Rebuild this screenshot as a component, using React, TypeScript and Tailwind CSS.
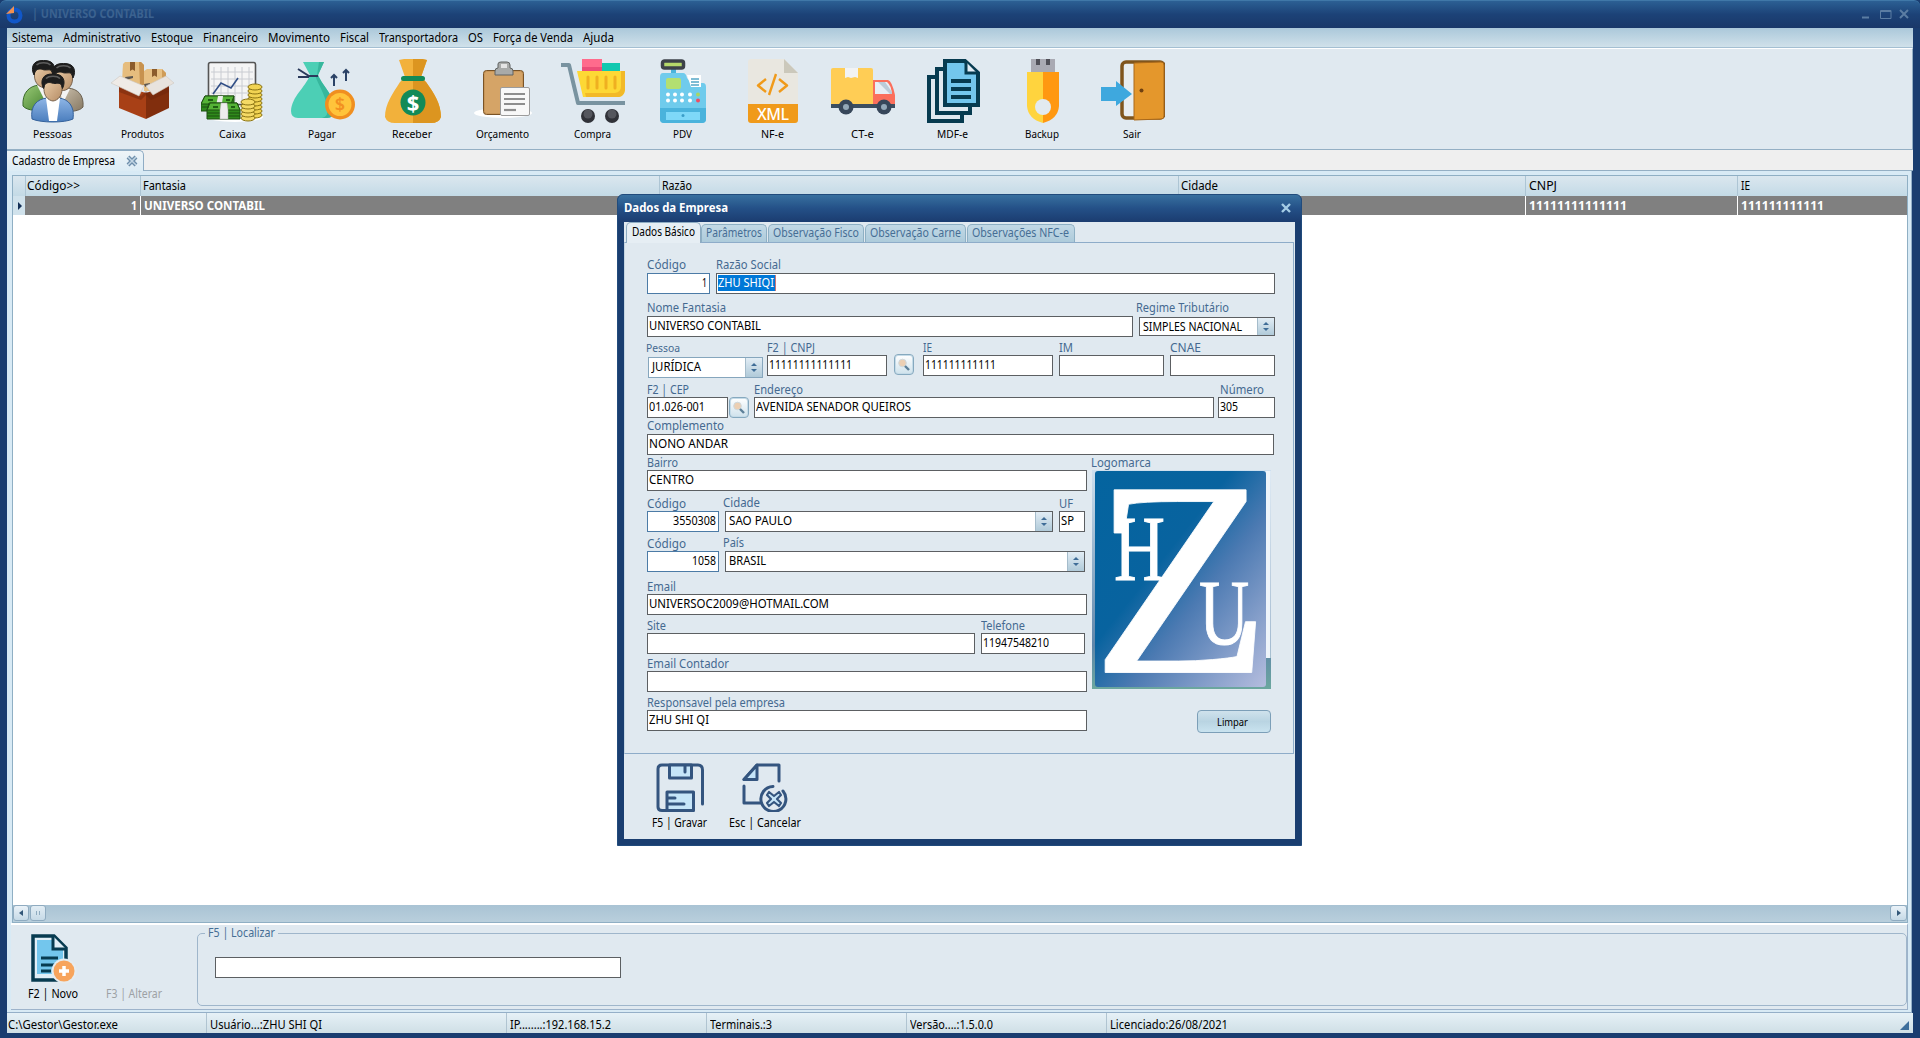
import React, { useLayoutEffect, useRef } from "react";

type Kids = { children?: React.ReactNode; c?: string };

/* Text condensed or expanded horizontally to fill the width of its box. */
function T({ children, c = "" }: Kids) {
  const outer = useRef<HTMLSpanElement>(null);
  const inner = useRef<HTMLSpanElement>(null);
  useLayoutEffect(() => {
    const o = outer.current;
    const i = inner.current;
    if (o && i && i.offsetWidth > 0) {
      i.style.transform = `scaleX(${o.clientWidth / i.getBoundingClientRect().width})`;
    }
  }, []);
  return (
    <span ref={outer} className={`block shrink-0 whitespace-nowrap ${c}`}>
      <span ref={inner} className="inline-block origin-left align-top">
        {children}
      </span>
    </span>
  );
}

function Svg({ children }: Kids) {
  return (
    <svg viewBox="0 0 64 64" className="size-16 shrink-0">
      {children}
    </svg>
  );
}

/* ---------- toolbar icons ---------- */

const Head = ({ x, y }: { x: number; y: number }) => (
  <g transform={`translate(${x} ${y})`}>
    <path d="M-9 9C-9 4 9 4 9 9V16C9 22 5 27 0 27.500C-5 27-9 22-9 16Z" fill="url(#skin)" stroke="#6d5741" strokeWidth=".9" />
    <path d="M-9.500 15C-13 8-11 0 0 .5C11 0 13 8 9.500 15L8.500 12C7 8 3 11-1 9.500C-4 8.500-7 9-8.500 12Z" fill="#1d1d1d" stroke="#1d1d1d" strokeLinejoin="round" />
    <path d="M-7 5C-4 2 4 2 7 5" stroke="#5e5e5e" strokeWidth="1.500" fill="none" />
  </g>
);

const Pessoas = () => (
  <Svg>
    <defs>
      <linearGradient id="gr" x1="0" y1="0" x2="1" y2="1"><stop offset="0" stopColor="#9bcb78" /><stop offset="1" stopColor="#3c7a27" /></linearGradient>
      <linearGradient id="br" x1="0" y1="0" x2="1" y2="1"><stop offset="0" stopColor="#cfc4b1" /><stop offset="1" stopColor="#857761" /></linearGradient>
      <linearGradient id="bl" x1="0" y1="0" x2="0" y2="1"><stop offset="0" stopColor="#8fb6e6" /><stop offset="1" stopColor="#4a7dbd" /></linearGradient>
      <linearGradient id="skin" x1="0" y1="0" x2="1" y2="1"><stop offset="0" stopColor="#edcfaa" /><stop offset="1" stopColor="#b58c65" /></linearGradient>
    </defs>
    <path d="M2 47C1 34 8 27 18 26L30 28L28 52C18 52 6 52 2 47Z" fill="url(#gr)" stroke="#39692a" />
    <path d="M62 48C63 36 57 30 47 29L36 29L38 53C50 53 59 52 62 48Z" fill="url(#br)" stroke="#6b6050" />
    <path d="M16 26L26 46L30 28ZM38 29L42 44L49 30Z" fill="#f4f4f4" />
    <Head x={42.500} y={4} />
    <Head x={22.500} y={1} />
    <path d="M11 60C9 47 16 40 26 39H38C47 40 54 47 52 60C44 64 20 64 11 60Z" fill="url(#bl)" stroke="#35629c" />
    <path d="M25 39L28 62H36L39 39Z" fill="#fff" />
    <Head x={32} y={14.500} />
  </Svg>
);

const Produtos = () => (
  <Svg>
    <path d="M12 5L14 3H30L33 6V26H14L11 22Z" fill="#e6bd7e" />
    <path d="M28 3H30L33 6V26H29Z" fill="#c7924f" />
    <path d="M19 3H24V12L21.500 10.500L19 12Z" fill="#8c5c2c" />
    <path d="M33 12L36 10H51L55 14V26L44 32H33Z" fill="#e8c184" />
    <path d="M51 10L55 14V26L51 27Z" fill="#cf9c58" />
    <path d="M41 10H46V18L43.500 16.500L41 18Z" fill="#8c5c2c" />
    <path d="M14 18L22 17V19L15 21Z" fill="#5b5651" />
    <path d="M33 25L39 24V26L34 28Z" fill="#5b5651" />
    <path d="M8 26L35 34V60L8 49Z" fill="#a84016" />
    <path d="M35 34L58 26V49L35 60Z" fill="#812e0d" />
    <path d="M8 26L27 35L30 37L35 32L40 37L58 28V33L40 41L35 36L30 41L8 33Z" fill="#6b230a" opacity=".45" />
    <path d="M9 17L33 27L28 37L0 24Z" fill="#efebe7" stroke="#cfc7c0" strokeWidth=".6" />
    <path d="M55 17L35 27L42 36L63 24Z" fill="#e8e3de" stroke="#cfc7c0" strokeWidth=".6" />
  </Svg>
);

const Caixa = () => (
  <Svg>
    <ellipse cx="34" cy="58" rx="28" ry="5" fill="#fff" />
    <rect x="7.500" y="3.500" width="47" height="42" rx="2" fill="#f5f5f5" stroke="#555" strokeWidth="1.600" />
    <path d="M13 8V42M20 8V42M27 8V42M34 8V42M41 8V42M48 8V42M10 13H52M10 20H52M10 27H52M10 34H52" stroke="#c9ccd2" />
    <path d="M12 35L20 24L30 29L37 19" stroke="#324f86" strokeWidth="1.600" fill="none" />
    {[56, 52, 48, 44, 40, 36, 32, 28].map((y) => (
      <ellipse key={y} cx="54" cy={y} rx="7" ry="3" fill="#f1d352" stroke="#8b7413" />
    ))}
    {[59, 55, 51, 47, 43].map((y) => (
      <ellipse key={y} cx="47" cy={y} rx="7" ry="3" fill="#f4da65" stroke="#8b7413" />
    ))}
    <path d="M4 37H33V47L30 52H0V45Z" fill="#2f8a1c" stroke="#1c4f10" />
    <path d="M4 37H33L30 45H0Z" fill="#55b336" stroke="#1c4f10" />
    <path d="M17 37H22L20 52H14Z" fill="#ececec" />
    <path d="M8 44H36L39 51V60H6V51Z" fill="#2f8a1c" stroke="#1c4f10" />
    <path d="M9 44H36L39 51H6Z" fill="#55b336" stroke="#1c4f10" />
    <path d="M6 54H39M6 57H39M1 48H8" stroke="#1c4f10" />
    <path d="M20 44H26L27 51V60H19V51Z" fill="#ededed" stroke="#aaa" strokeWidth=".5" />
    <path d="M12 48H17M30 48H34M7 41H12M25 41H29" stroke="#1f6012" strokeWidth="2" />
  </Svg>
);

const Pagar = () => (
  <Svg>
    <path d="M12 3H33L27 16C32 28 44 36 43 52Q43 59 36 59H7Q0 59 0 52C1 37 14 29 19 16Z" fill="#4ccfb5" />
    <path d="M33 3L27 16L26 16L28 3ZM27 16C32 28 44 36 43 52Q43 59 36 59H31Q38 57 36 50C36 38 28 28 24 16Z" fill="#37b79d" />
    <path d="M7 10L18 17H27M7 18H18" stroke="#2b3a5b" strokeWidth="2" fill="none" />
    <path d="M43 27V16M40 19L43 16L46 19M55 22V11M52 14L55 11L58 14" stroke="#2b4266" strokeWidth="2" fill="none" />
    <circle cx="49" cy="45.500" r="15" fill="#f08f20" />
    <circle cx="49" cy="45.500" r="11.500" fill="#ffc43b" />
    <text x="49" y="52" textAnchor="middle" fontFamily="Noto Sans" fontSize="18" fontWeight="600" fill="#f39020">$</text>
  </Svg>
);

const Receber = () => (
  <Svg>
    <path d="M18 1C25-1 38-1 46 1L40 18L45 23C53 34 60 45 60 58Q58 64 50 64H14Q6 64 4 58C4 45 12 34 19 23L24 18Z" fill="#f2b13b" />
    <path d="M32 0C38-1 42 0 46 1L40 18L45 23C53 34 60 45 60 58Q58 64 50 64H32Z" fill="#dc9520" />
    <rect x="20" y="17" width="24" height="5" rx="2.500" fill="#128a57" />
    <ellipse cx="32" cy="43.500" rx="12.500" ry="13" fill="#128a57" />
    <text x="32" y="51.500" textAnchor="middle" fontFamily="Noto Sans" fontSize="22" fontWeight="700" fill="#fff">$</text>
  </Svg>
);

const Orcamento = () => (
  <Svg>
    <ellipse cx="32" cy="54" rx="29" ry="5" fill="#fff" />
    <rect x="12.500" y="11.500" width="40" height="44" rx="3" fill="#c8975a" stroke="#7a5326" />
    <rect x="14" y="13" width="37" height="41" rx="2" fill="#d5a467" />
    <path d="M24 16V12Q24 9 27 9V5Q27 3 30 3H36Q39 3 39 6V9Q42 9 42 12V16Z" fill="#a8aaa9" stroke="#606362" />
    <rect x="30" y="5" width="6" height="4" fill="#e4e4e4" />
    <rect x="29.500" y="28.500" width="29" height="28" rx="1.500" fill="#f8f8f8" stroke="#9c9c9c" />
    <path d="M33 35H54M33 40H54M33 45H54" stroke="#8e8e8e" strokeWidth="2.200" />
    <path d="M33 51H45" stroke="#8e8e8e" strokeWidth="2.200" />
  </Svg>
);

const Compra = () => (
  <Svg>
    <rect x="21" y="0" width="20" height="12" fill="#ff6b8c" />
    <rect x="21" y="8" width="20" height="4" fill="#ec4d78" />
    <rect x="41" y="4" width="18" height="8" fill="#10c8b0" />
    <path d="M16 12H64V31Q63 37 58 38H22Z" fill="#fdd835" />
    <path d="M60 12H64V31Q63 37 58 38H25L24 34H54Q60 33 60 27Z" fill="#f2b928" />
    <g stroke="#efb021" strokeWidth="3" strokeLinecap="round"><path d="M27 18V29M36 18V29M45 18V29M54 18V29" /></g>
    <path d="M0 6H8L17 44H64" stroke="#7993a0" strokeWidth="4" fill="none" strokeLinejoin="round" />
    <circle cx="27" cy="57" r="7" fill="#303238" /><circle cx="51" cy="57" r="7" fill="#303238" />
    <circle cx="27" cy="55" r="4.500" fill="#54565d" /><circle cx="51" cy="55" r="4.500" fill="#54565d" />
  </Svg>
);

const Pdv = () => (
  <Svg>
    <rect x="20" y="9" width="5" height="8" fill="#4bb4dc" />
    <rect x="11.500" y="2" width="21" height="7" rx="2" fill="#b5d86a" stroke="#3d4249" strokeWidth="3.500" />
    <path d="M9 18Q9 14 12 14H32Q35 14 36 19L40 24H52Q55 24 55 28V60Q55 64 51 64H13Q9 64 9 60Z" fill="#6fcbec" />
    <path d="M9 49H55V60Q55 64 51 64H13Q9 64 9 60Z" fill="#4ab3dc" />
    <rect x="15" y="19" width="15" height="11" rx="2" fill="#b3df71" />
    <path d="M36 16H50V28H40Z" fill="#fff" />
    <path d="M40 20H48M40 23H48M40 26H48" stroke="#55a7c6" strokeWidth="1.600" />
    {[17, 24, 31, 39].map((x) => <g key={x} fill="#fff"><circle cx={x} cy="35.500" r="2" /><circle cx={x} cy="41.500" r="2" /></g>)}
    <circle cx="47" cy="35.500" r="2" fill="#a8d663" /><circle cx="47" cy="41.500" r="2" fill="#ef4d63" />
    <rect x="15" y="53" width="34" height="8" fill="#7ed8f8" /><circle cx="32" cy="56.500" r="1.500" fill="#3a9dc8" />
  </Svg>
);

const Nfe = () => (
  <Svg>
    <path d="M7 3Q7 0 10 0H43L57 14V46H7Z" fill="#e9e7e0" />
    <path d="M43 0L57 14H43Z" fill="#cbc8bb" />
    <path d="M25 20L17 26.500L25 33M38 20L46 26.500L38 33M35 15L28 36" stroke="#f09a1a" strokeWidth="2.400" fill="none" strokeLinejoin="round" />
    <path d="M7 45H57V61Q57 64 54 64H10Q7 64 7 61Z" fill="#f09a1a" />
    <text x="32" y="60.500" textAnchor="middle" fontFamily="Noto Sans" fontSize="16" fontWeight="500" fill="#fff" textLength="32">XML</text>
  </Svg>
);

const Cte = () => (
  <Svg>
    <rect x="0" y="9" width="42" height="38" rx="2" fill="#ffcd55" />
    <path d="M14 9H27V19L24 18L20 19L17 18L14 19Z" fill="#f2f3f4" />
    <path d="M42 21H57Q61 22 64 36V46H42Z" fill="#fb6f5c" />
    <path d="M44 23H56Q60 26 61 35H44Z" fill="#e8eef4" /><path d="M47 23H54L61 33V35H59Z" fill="#bccbd8" />
    <path d="M0 45H64V49H0Z" fill="#3c4e60" />
    <circle cx="15" cy="48" r="7.500" fill="#37475a" /><circle cx="15" cy="48" r="3" fill="#93a8b8" />
    <circle cx="53" cy="48" r="7.500" fill="#37475a" /><circle cx="53" cy="48" r="3" fill="#93a8b8" />
  </Svg>
);

const Mdfe = () => (
  <Svg>
    <path d="M15 18H8V62H41V56" stroke="#073b50" strokeWidth="4" fill="none" />
    <path d="M23 10H16V54H49V48" stroke="#073b50" strokeWidth="4" fill="none" />
    <path d="M24 2H44L57 14V46H24Z" fill="#73c6ed" stroke="#073b50" strokeWidth="4" />
    <path d="M45 3V14H56" fill="#e3edf5" stroke="#073b50" strokeWidth="3" />
    <path d="M30 22H50M30 30H50M30 38H50" stroke="#073b50" strokeWidth="3.800" />
  </Svg>
);

const Backup = () => (
  <Svg>
    <rect x="20" y="0" width="24" height="14" fill="#a9aab3" />
    <path d="M25 0H29V6H25ZM35 0H39V6H35Z" fill="#505058" />
    <path d="M16 13H32V64Q17 60 16 47Z" fill="#ffd43e" />
    <path d="M32 13H48V47Q47 60 32 64Z" fill="#ff9811" />
    <circle cx="32" cy="48" r="8" fill="#e2eaf0" />
  </Svg>
);

const Sair = () => (
  <Svg>
    <rect x="21" y="3" width="42" height="56" rx="4" fill="#e8edf0" stroke="#80551c" strokeWidth="3.500" />
    <path d="M33 4L60 3Q63 3 63 6V57Q63 60 60 60L33 61Z" fill="#e4972c" stroke="#a9681a" />
    <circle cx="40.500" cy="31.500" r="2" fill="#70400f" />
    <path d="M0 28H15V22L31 35L15 47V42H0Z" fill="#3ea8de" />
  </Svg>
);

const tools: [string, string, () => React.ReactElement][] = [
  ["Pessoas", "w-[39px]", Pessoas],
  ["Produtos", "w-[43px]", Produtos],
  ["Caixa", "w-[27px]", Caixa],
  ["Pagar", "w-[28px]", Pagar],
  ["Receber", "w-[40px]", Receber],
  ["Orçamento", "w-[53px]", Orcamento],
  ["Compra", "w-[37px]", Compra],
  ["PDV", "w-[19px]", Pdv],
  ["NF-e", "w-[23px]", Nfe],
  ["CT-e", "w-[23px]", Cte],
  ["MDF-e", "w-[31px]", Mdfe],
  ["Backup", "w-[34px]", Backup],
  ["Sair", "w-[18px]", Sair],
];

const menu: [string, string][] = [
  ["Sistema", "w-[41px]"],
  ["Administrativo", "w-[78px]"],
  ["Estoque", "w-[42px]"],
  ["Financeiro", "w-[55px]"],
  ["Movimento", "w-[62px]"],
  ["Fiscal", "w-[29px]"],
  ["Transportadora", "w-[79px]"],
  ["OS", "w-[15px]"],
  ["Força de Venda", "w-[80px]"],
  ["Ajuda", "w-[31px]"],
];

/* ---------- form pieces ---------- */

type FieldProps = { w: string; label: string; lw: string; lc?: string; value?: string; vw?: string; right?: boolean; select?: boolean; c?: string; box?: string };

const Arrows = () => (
  <div className="flex w-[17px] flex-col items-center justify-center gap-[3px] border-l border-[#a5bccb] bg-linear-to-b from-[#e2edf5] to-[#b0cad9]">
    <div className="border-x-[3px] border-b-[3px] border-x-transparent border-b-[#3f6d97]" />
    <div className="border-x-[3px] border-t-[3px] border-x-transparent border-t-[#3f6d97]" />
  </div>
);

function Field({ w, label, lw, lc = "", value, vw = "", right, select, c = "", box }: FieldProps) {
  const frame = box ?? (right ? "h-[21px] border-[#4c7ba6]" : "h-[21px] border-[#5c5f62]");
  return (
    <div className={`flex shrink-0 flex-col ${w} ${c}`}>
      <div className={`h-4 leading-4 text-[#456990] ${lc}`}>
        <T c={lw}>{label}</T>
      </div>
      <div className={`flex border bg-white ${frame}`}>
        <div className={`flex min-w-0 grow text-black leading-[17px] ${right ? "justify-end pr-[2px]" : select ? "pl-[3px]" : "pl-px"}`}>
          {value && <T c={vw}>{value}</T>}
        </div>
        {select && <Arrows />}
      </div>
    </div>
  );
}

const Search = ({ c }: { c: string }) => (
  <div className={`flex h-[21px] w-5 shrink-0 items-center justify-center rounded-[4px] border border-[#86a9bf] bg-linear-to-b from-white to-[#cfe2ec] shadow-[inset_0_0_0_1px_#c5dbe8] ${c}`}>
    <svg viewBox="0 0 14 14" className="size-3.5">
      <circle cx="5.500" cy="5" r="3.800" fill="#eccfb3" stroke="#cfd8dc" />
      <path d="M8 8L12 12" stroke="#5d8099" strokeWidth="2.400" />
    </svg>
  </div>
);

const tabs: [string, string, string][] = [
  ["Parâmetros", "w-[66px]", "w-[56px]"],
  ["Observação Fisco", "w-[96px]", "w-[86px]"],
  ["Observação Carne", "w-[101px]", "w-[91px]"],
  ["Observações NFC-e", "w-[108px]", "w-[97px]"],
];

const Logo = () => (
  <svg viewBox="0 0 179 219" className="h-[219px] w-[179px] overflow-visible">
    <defs>
      <linearGradient id="lg" x1="0" y1="0" x2="1" y2="1">
        <stop offset="0" stopColor="#04649f" /><stop offset=".4" stopColor="#08639f" /><stop offset=".6" stopColor="#4c7ab2" /><stop offset="1" stopColor="#b5bdde" />
      </linearGradient>
      <linearGradient id="lb" x1="0" y1="0" x2="0" y2="1">
        <stop offset="0" stopColor="#cfe0ee" /><stop offset=".8" stopColor="#5f86aa" /><stop offset="1" stopColor="#6ba79e" />
      </linearGradient>
    </defs>
    <rect width="179" height="219" fill="url(#lb)" />
    <rect x="173.500" y="1" width="5" height="187" fill="#eef4fa" />
    <rect x="3" y="1" width="171" height="216" rx="3" fill="url(#lg)" />
    <text transform="translate(-1 202.500) scale(2.960 2.790)" fontFamily="Liberation Serif" fontSize="100" fill="#fff" stroke="#fff" strokeWidth=".3">Z</text>
    <text transform="translate(22 109.500) scale(.76 1)" fontFamily="Liberation Serif" fontSize="93" fill="#fff" stroke="#fff">H</text>
    <text transform="translate(107 174) scale(.74 1)" fontFamily="Liberation Serif" fontSize="94" fill="#fff" stroke="#fff">U</text>
  </svg>
);

function Dialog() {
  return (
    <div className="absolute left-[617px] top-[194px] flex h-[652px] w-[685px] flex-col rounded-t-[6px] border border-[#214b7c] bg-[#1a3e70] px-[6px] pb-[6px]">
      <div className="-mx-[6px] flex h-[27px] items-center justify-between rounded-t-[5px] bg-linear-to-b from-[#38709f] via-[#245087] to-[#1b3c70] pl-[6px] pr-[9px]">
        <T c="-mt-px w-[104px] text-[12px] font-bold leading-4 text-white">Dados da Empresa</T>
        <svg viewBox="0 0 12 12" className="-mt-px size-3"><path d="M2 2L10 10M10 2L2 10" stroke="#a5cde6" strokeWidth="2.400" /></svg>
      </div>
      <div className="flex grow flex-col bg-[#e0e9f0] text-[12px]">
        <div className="flex h-[20px] items-end pl-[2px] leading-4">
          <div className="relative z-10 -mb-px flex h-[21px] w-[75px] rounded-t-[5px] border border-b-0 border-[#8eacc2] bg-[#e6eef4] pl-[5px] pt-px text-black">
            <T c="w-[63px]">Dados Básico</T>
          </div>
          {tabs.map(([t, w, tw]) => (
            <div key={t} className={`mr-px flex h-[18px] rounded-t-[5px] border border-b-0 border-[#8eb0c4] bg-linear-to-b from-[#c3d9e6] to-[#adcbdb] pl-[4px] text-[#466e95] ${w}`}>
              <T c={tw}>{t}</T>
            </div>
          ))}
        </div>
        <div className="mr-px h-[512px] border border-[#8eacc9] border-l-[#c4d5e2] pl-[22px] pt-[14px]">
          <div className="flex">
            <Field w="w-[63px]" label="Código" lw="w-[39px]" value="1" vw="w-[5px]" right />
            <div className="ml-[6px] flex w-[559px] flex-col">
              <div className="h-4 leading-4 text-[#456990]"><T c="w-[65px]">Razão Social</T></div>
              <div className="h-[21px] border border-[#5c5f62] bg-white p-px">
                <div className="h-[16px] w-[58px] border-r border-[#c77] bg-[#0078d7] leading-4 text-white"><T c="w-[56px]">ZHU SHIQI</T></div>
              </div>
            </div>
          </div>
          <div className="mt-[6px] flex">
            <Field w="w-[486px]" label="Nome Fantasia" lw="w-[79px]" value="UNIVERSO CONTABIL" vw="w-[112px]" />
            <Field w="w-[139px]" c="ml-[3px]" label="Regime Tributário" lw="w-[93px]" value="SIMPLES NACIONAL" vw="w-[99px]" select box="ml-[3px] mt-px h-[19px] border-[#5c5f62]" />
          </div>
          <div className="mt-[2px] flex">
            <Field w="w-[117px]" c="-ml-px mr-[3px]" label="Pessoa" lw="w-[34px]" lc="mt-px -mb-px text-[11px]" value="JURÍDICA" vw="w-[49px]" select box="ml-[2px] -mb-[3px] mt-[2px] h-[21px] border-[#86a6bd]" />
            <Field w="w-[120px]" c="ml-px" label="F2 | CNPJ" lw="w-[48px]" lc="mt-px -mb-px" value="11111111111111" vw="w-[83px]" />
            <Search c="ml-[7px] mt-[15px]" />
            <Field w="w-[130px]" c="ml-[9px]" label="IE" lw="w-[9px]" lc="mt-px -mb-px" value="111111111111" vw="w-[71px]" />
            <Field w="w-[105px]" c="ml-[6px]" label="IM" lw="w-[14px]" lc="mt-px -mb-px" />
            <Field w="w-[105px]" c="ml-[6px]" label="CNAE" lw="w-[31px]" lc="mt-px -mb-px" />
          </div>
          <div className="mt-[5px] flex">
            <Field w="w-[81px]" label="F2 | CEP" lw="w-[42px]" lc="mt-px -mb-px" value="01.026-001" vw="w-[56px]" />
            <Search c="ml-px mt-[16px]" />
            <Field w="w-[460px]" c="ml-[5px]" label="Endereço" lw="w-[49px]" lc="mt-px -mb-px" value="AVENIDA SENADOR QUEIROS" vw="w-[155px]" />
            <Field w="w-[57px]" c="ml-[4px]" label="Número" lw="w-[44px] ml-[2px]" lc="mt-px -mb-px" value="305" vw="w-[18px]" />
          </div>
          <Field w="w-[627px]" label="Complemento" lw="w-[77px]" value="NONO ANDAR" vw="w-[79px]" />
          <div className="-mt-px flex">
            <div className="w-[440px]">
              <Field w="w-[440px]" label="Bairro" lw="w-[31px]" lc="mt-px -mb-px" value="CENTRO" vw="w-[45px]" />
              <div className="mt-[4px] flex">
                <Field w="w-[72px]" label="Código" lw="w-[39px]" lc="mt-px -mb-px" value="3550308" vw="w-[43px]" right />
                <Field w="w-[330px]" c="ml-[4px]" label="Cidade" lw="w-[37px]" value="SAO PAULO" vw="w-[63px]" select box="ml-[2px] h-[21px] border-[#5c5f62]" />
                <Field w="w-[26px]" c="ml-[6px]" label="UF" lw="w-[14px]" lc="mt-px -mb-px" value="SP" vw="w-[13px]" />
              </div>
              <div className="mt-[3px] flex">
                <Field w="w-[72px]" label="Código" lw="w-[39px]" lc="mt-px -mb-px" value="1058" vw="w-[24px]" right />
                <Field w="w-[362px]" c="ml-[4px]" label="País" lw="w-[21px]" value="BRASIL" vw="w-[37px]" select box="ml-[2px] h-[21px] border-[#5c5f62]" />
              </div>
              <Field w="w-[440px]" c="mt-[6px]" label="Email" lw="w-[29px]" lc="mt-px -mb-px" value="UNIVERSOC2009@HOTMAIL.COM" vw="w-[180px]" />
              <div className="mt-[2px] flex">
                <Field w="w-[328px]" label="Site" lw="w-[19px]" lc="mt-px -mb-px" />
                <Field w="w-[104px]" c="ml-[6px]" label="Telefone" lw="w-[44px]" lc="mt-px -mb-px" value="11947548210" vw="w-[66px]" />
              </div>
              <Field w="w-[440px]" c="mt-px" label="Email Contador" lw="w-[82px]" lc="mt-px -mb-px" />
              <Field w="w-[440px]" c="mt-[2px]" label="Responsavel pela empresa" lw="w-[138px]" lc="mt-px -mb-px" value="ZHU SHI QI" vw="w-[60px]" />
            </div>
            <div className="ml-[4px] flex w-[181px] flex-col">
              <T c="mt-px -mb-px w-[60px] leading-4 text-[#456990]">Logomarca</T>
              <div className="ml-px"><Logo /></div>
              <div className="ml-[106px] mt-[21px] flex h-[23px] w-[74px] items-center justify-center rounded-[4px] border border-[#7c9fb8] bg-linear-to-b from-[#cfe2ec] via-[#b9d4e2] to-[#c9e3ef] pr-[3px] text-[11px]">
                <T c="w-[31px] leading-4">Limpar</T>
              </div>
            </div>
          </div>
        </div>
        <div className="flex pl-[27px] pt-[8px] leading-4 text-black">
          <div className="flex w-[57px] flex-col items-center">
            <svg viewBox="0 -1 48 50" className="h-[50px] w-[48px]" fill="none" stroke="#34557f" strokeWidth="3" strokeLinecap="round" strokeLinejoin="round">
              <path d="M46.500 41V7Q46.500 2 42 2H6Q2 2 2 6V44Q2 47.500 6 47.500H37" />
              <path d="M13.500 2H35.500V15H13.500Z" fill="#c6e5f8" /><path d="M29 3V9" />
              <path d="M11 29H37.500V47.500H11Z" fill="#c6e5f8" /><path d="M12 35H19M12 41H28" />
            </svg>
            <T c="mt-[3px] w-[55px]">F5 | Gravar</T>
          </div>
          <div className="ml-[19px] flex w-[75px] flex-col items-center">
            <svg viewBox="0 -1 46 50" className="h-[50px] w-[46px]" fill="none" stroke="#34557f" strokeWidth="3" strokeLinecap="round" strokeLinejoin="round">
              <path d="M37 18V2H15L2 16.500M2 23V40H19" />
              <path d="M15 2V16.500H2Z" fill="#c6e5f8" />
              <path d="M31 23.500A12.500 12.500 0 1 0 41 28" />
              <path d="M27 29L32 33L37 29L39 32L35 36L39 40L37 43L32 39L27 43L25 40L29 36L25 32Z" fill="#c6e5f8" strokeWidth="2.200" />
            </svg>
            <T c="mt-[3px] w-[72px]">Esc | Cancelar</T>
          </div>
        </div>
      </div>
    </div>
  );
}

const columns: [string, string, string, string, string][] = [
  ["Código>>", "w-[115px] pl-px", "w-[53px]", "", ""],
  ["Fantasia", "w-[519px] pl-[2px]", "w-[43px]", "UNIVERSO CONTABIL", "w-[121px]"],
  ["Razão", "w-[519px] pl-[2px]", "w-[30px]", "", ""],
  ["Cidade", "w-[347px] pl-[2px]", "w-[37px]", "", ""],
  ["CNPJ", "w-[212px] pl-[3px]", "w-[28px]", "11111111111111", "w-[98px]"],
  ["IE", "grow pl-[3px]", "w-[9px]", "111111111111", "w-[83px]"],
];

const status: [string, string, string][] = [
  ["C:\\Gestor\\Gestor.exe", "w-[199px] pl-px", "w-[110px]"],
  ["Usuário...:ZHU SHI QI", "w-[300px] pl-[3px] border-l", "w-[112px]"],
  ["IP........:192.168.15.2", "w-[200px] pl-[3px] border-l", "w-[101px]"],
  ["Terminais.:3", "w-[200px] pl-[3px] border-l", "w-[62px]"],
  ["Versão....:1.5.0.0", "w-[200px] pl-[3px] border-l", "w-[83px]"],
  ["Licenciado:26/08/2021", "grow pl-[3px] border-l", "w-[118px]"],
];

export default function App() {
  return (
    <div className="relative flex h-[1038px] w-[1920px] flex-col overflow-hidden bg-[#1a3d70] font-['Noto_Sans',sans-serif] text-[12px] text-black">
      {/* title bar */}
      <div className="flex h-[28px] shrink-0 items-center rounded-t-[6px] border-t border-[#4078a8] bg-linear-to-b from-[#2c6094] via-[#1c4277] to-[#1a3869] pl-[6px] pr-[10px]">
        <svg viewBox="0 0 18 18" className="size-[18px]">
          <circle cx="8.500" cy="9.500" r="6" fill="none" stroke="#1157c9" strokeWidth="4" />
          <path d="M0 8L8 0V7Z" fill="#f09050" />
        </svg>
        <T c="-mt-px ml-[8px] w-[122px] font-bold leading-4 text-[#3b6290]">| UNIVERSO CONTABIL</T>
        <svg viewBox="0 0 50 12" className="-mt-[2px] ml-auto h-3 w-[50px]" fill="none" stroke="#5b7da3">
          <path d="M2 9.500H9" strokeWidth="2" /><path d="M20.500 2.500H31V10.500H20.500ZM20 3.500H31" /><path d="M40 2L48 10M48 2L40 10" strokeWidth="2" />
        </svg>
      </div>

      <div className="mx-[7px] flex h-[1005px] shrink-0 flex-col">
        <div className="flex h-[20px] shrink-0 gap-[10px] border-b border-[#a4bfd2] bg-linear-to-b from-[#abc8da] to-[#d0e1ea] pl-[5px] leading-[19px]">
          {menu.map(([m, w]) => <T key={m} c={w}>{m}</T>)}
        </div>
        <div className="flex h-[102px] shrink-0 border-b border-r border-t border-b-[#94afc4] border-r-[#94afc4] border-t-white bg-[#e0e9f0] pt-[10px]">
          {tools.map(([name, w, Icon]) => (
            <div key={name} className="flex w-[90px] shrink-0 flex-col items-center text-[11px]">
              <div className="ml-px"><Icon /></div>
              <T c={`mt-[3px] leading-4 ${w}`}>{name}</T>
            </div>
          ))}
        </div>

        {/* document tab */}
        <div className="flex h-[21px] shrink-0 border-b border-[#94afc4] bg-[#efefef]">
          <div className="-mb-px flex h-[21px] w-[137px] items-center rounded-tr-[5px] border-r border-t border-[#8facc4] bg-linear-to-b from-[#eef4f8] to-[#dcecf5] pl-[5px]">
            <T c="-mt-px w-[103px] leading-4">Cadastro de Empresa</T>
            <svg viewBox="0 0 12 12" className="ml-[11px] size-3"><path d="M2 2L10 10M10 2L2 10" stroke="#6d8eab" strokeWidth="4" /><path d="M2 2L10 10M10 2L2 10" stroke="#c3d6e4" strokeWidth="1.500" /></svg>
          </div>
        </div>

        <div className="mr-px flex h-[842px] shrink-0 flex-col border-b border-r border-[#94afc8] bg-[#d8eaf5] pl-[5px] pr-[3px] pt-[4px]">
          {/* grid */}
          <div className="flex h-[748px] shrink-0 flex-col border border-[#8fafc4] bg-white">
            <div className="flex h-[20px] shrink-0 bg-linear-to-b from-[#dbe7ef] to-[#c3dae6] leading-5">
              <div className="w-[12px] shrink-0" />
              {columns.map(([h, w, tw]) => (
                <div key={h} className={`shrink-0 border-l border-[#adc5d4] ${w}`}><T c={tw}>{h}</T></div>
              ))}
            </div>
            <div className="flex h-[19px] shrink-0 bg-[#808080] font-bold leading-[19px] text-white">
              <div className="flex w-[12px] shrink-0 items-center bg-[#d0e2ec] pl-[5px]">
                <div className="border-y-[4px] border-l-[4px] border-y-transparent border-l-[#132f57]" />
              </div>
              {columns.map(([h, w, , v, vw], i) => (
                <div key={h} className={`shrink-0 border-l ${i === 0 ? "flex justify-end border-[#808080] pr-[3px]" : i === 2 || i === 3 ? "border-[#808080]" : "border-white"} ${w}`}>
                  {i === 0 && <T c="w-[6px]">1</T>}
                  {v && <T c={`${vw} ${i === 1 ? "ml-px" : ""}`}>{v}</T>}
                </div>
              ))}
            </div>
            <div className="grow" />
            <div className="flex h-[17px] shrink-0 justify-between bg-linear-to-b from-[#a9c3d4] to-[#b9cfdc]">
              <div className="flex gap-px">
                <div className="flex h-[16px] w-[16px] items-center justify-center rounded-[3px] border border-[#8fabc0] bg-linear-to-b from-[#eaf2f8] to-[#c6dae7]"><div className="border-y-[3px] border-r-[4px] border-y-transparent border-r-[#335879]" /></div>
                <div className="flex h-[16px] w-[16px] items-center justify-center gap-[2px] rounded-[3px] border border-[#8fabc0] bg-linear-to-b from-[#e2edf4] to-[#c6dae7]"><div className="h-[4px] w-px bg-[#8fabc0]" /><div className="h-[4px] w-px bg-[#8fabc0]" /></div>
              </div>
              <div className="flex h-[16px] w-[17px] items-center justify-center rounded-[3px] border border-[#8fabc0] bg-linear-to-b from-[#eaf2f8] to-[#c6dae7]"><div className="border-y-[3px] border-l-[4px] border-y-transparent border-l-[#335879]" /></div>
            </div>
          </div>

          {/* record actions and search */}
          <div className="-ml-px flex h-[87px] shrink-0 border-b border-r border-t-2 border-b-[#9db3cb] border-r-[#9db3cb] border-t-white bg-[#e0e9f0]">
            <div className="flex w-[186px] shrink-0 pt-[9px]">
              <div className="ml-[17px] flex w-[51px] flex-col">
                <svg viewBox="0 0 46 50" className="ml-[3px] h-[50px] w-[46px]">
                  <path d="M2 2H23L35 14V46H2Z" fill="#e0eef6" stroke="#073b50" strokeWidth="3.500" />
                  <path d="M6 6H22V15H32V40H6Z" fill="#73c6ed" />
                  <path d="M22 2V15H35" fill="#e0eef6" stroke="#073b50" strokeWidth="3" />
                  <path d="M10 24H27M10 31H24M10 37H20" stroke="#073b50" strokeWidth="3" />
                  <circle cx="33" cy="37" r="12.500" fill="#e5ecf0" /><circle cx="33" cy="37" r="10.500" fill="#f7a45c" />
                  <path d="M33 32V42M28 37H38" stroke="#fff" strokeWidth="3.500" />
                </svg>
                <T c="mt-[2px] w-[50px] leading-4">F2 | Novo</T>
              </div>
              <T c="ml-[27px] mt-[52px] w-[56px] leading-4 text-[#9da1a5]">F3 | Alterar</T>
            </div>
            <fieldset className="mb-px h-[81px] grow rounded-[5px] border border-[#9fb6cb] pl-[17px]">
              <legend className="-ml-[10px] px-[3px] leading-4 text-[#466e95]"><T c="w-[67px]">F5 | Localizar</T></legend>
              <div className="mt-[16px] h-[21px] w-[406px] border border-[#5c5f62] bg-white" />
            </fieldset>
          </div>
        </div>

        {/* status bar */}
        <div className="flex h-[20px] shrink-0 bg-linear-to-b from-[#e6f1f7] to-[#cfdfe6] pr-[4px] leading-[24px]">
          {status.map(([s, w, tw]) => (
            <div key={s} className={`h-5 shrink-0 border-[#b0c4d1] ${w}`}><T c={tw}>{s}</T></div>
          ))}
          <div className="mt-auto mb-[3px] border-b-[9px] border-l-[9px] border-b-[#3e6f9c] border-l-transparent" />
        </div>
      </div>

      <Dialog />
    </div>
  );
}
